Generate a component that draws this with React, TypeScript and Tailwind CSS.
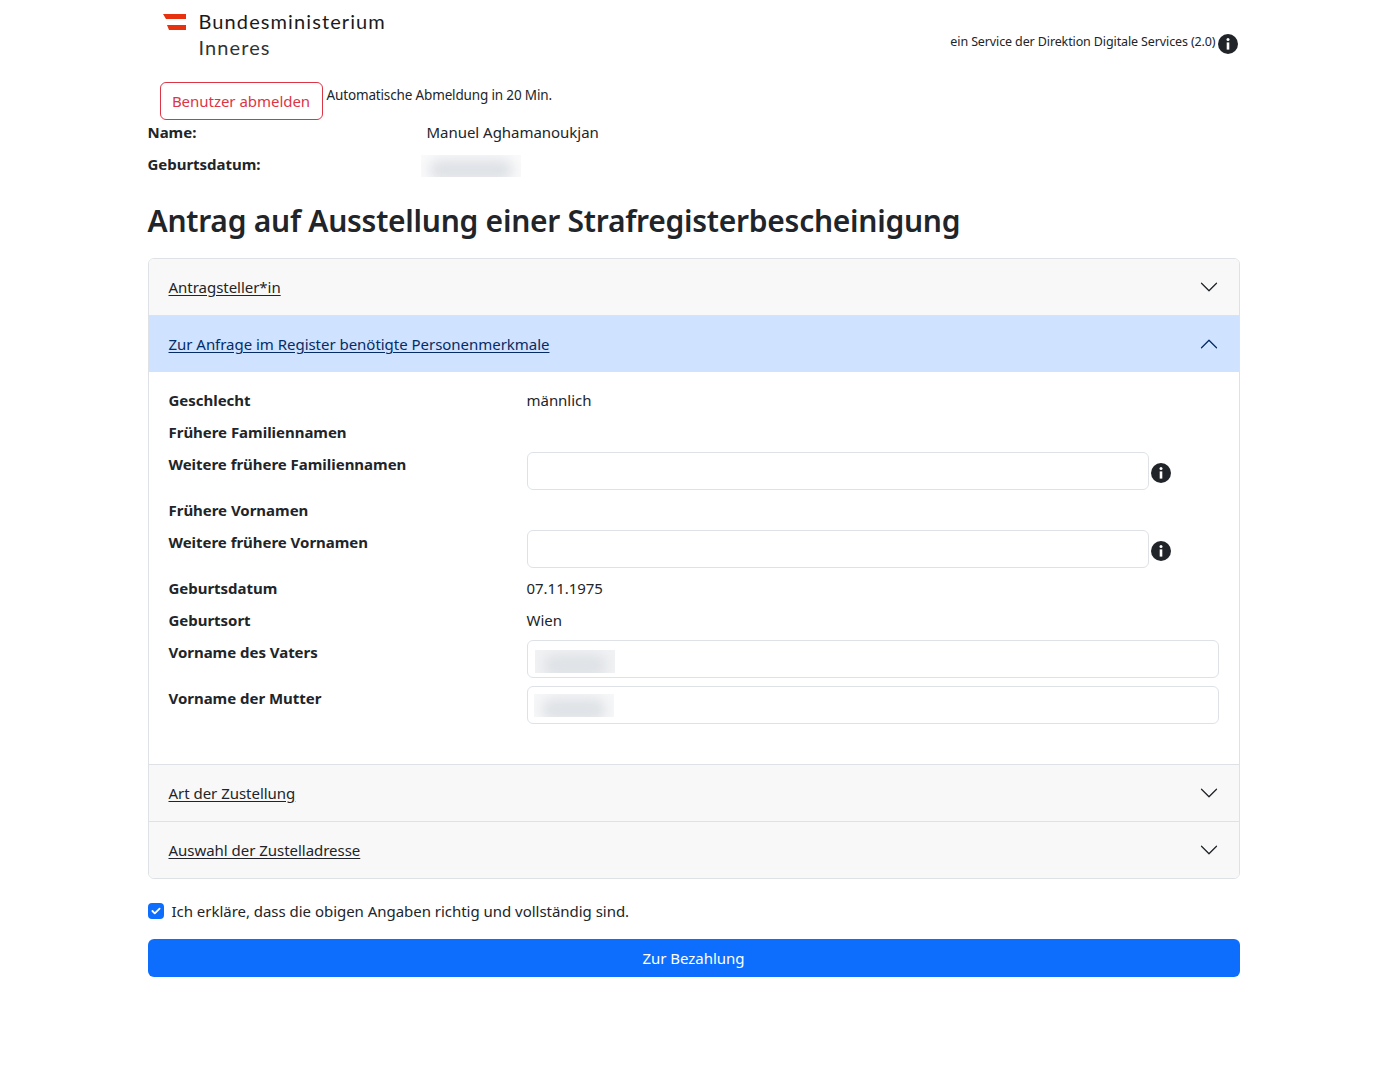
function InfoIcon({ className }: { className?: string }) {
    return (
        <svg className={className} viewBox="0 0 20 20" aria-hidden="true">
            <circle cx="10" cy="10" r="10" fill="#212529" />
            <circle cx="10" cy="5.6" r="1.5" fill="#fff" />
            <rect x="8.7" y="8.4" width="2.6" height="7.2" fill="#fff" />
        </svg>
    )
}

function Chevron({ up }: { up?: boolean }) {
    return (
        <svg className={up ? 'h-5 w-5 rotate-180' : 'h-5 w-5'} viewBox="0 0 16 16" fill="currentColor" aria-hidden="true">
            <path
                fillRule="evenodd"
                d="M1.646 4.646a.5.5 0 0 1 .708 0L8 10.293l5.646-5.647a.5.5 0 0 1 .708.708l-6 6a.5.5 0 0 1-.708 0l-6-6a.5.5 0 0 1 0-.708z"
            />
        </svg>
    )
}

function Blurred({ className }: { className?: string }) {
    return (
        <div className={`overflow-hidden ${className ?? ''}`}>
            <div className="mx-2 mt-1 h-full rounded-full bg-[#dfe2e6] blur-[6px]" />
        </div>
    )
}

function AccordionHeader({ title, open }: { title: string; open?: boolean }) {
    return (
        <div
            className={
                open
                    ? 'flex h-[56px] items-center justify-between bg-[#cfe2ff] pl-5 pr-5 text-[#052c65]'
                    : 'flex h-[56px] items-center justify-between bg-[#f8f8f8] pl-5 pr-5 text-[#212529]'
            }
        >
            <span className="underline underline-offset-2">{title}</span>
            <Chevron up={open} />
        </div>
    )
}

function Row({ label, children }: { label: string; children?: React.ReactNode }) {
    return (
        <div className="mb-2 grid grid-cols-[358px_1fr]">
            <div className="font-bold">{label}</div>
            <div>{children}</div>
        </div>
    )
}

function InputWithInfo() {
    return (
        <div className="flex items-center">
            <div className="h-[38px] w-[622px] rounded-md border border-[#dee2e6] bg-white" />
            <InfoIcon className="ml-[2px] mt-[3px] h-5 w-5" />
        </div>
    )
}

export default function App() {
    return (
        <div className="min-h-[1091px] bg-white font-['Noto_Sans',sans-serif] text-[15px] leading-6 tracking-[-0.03px] text-[#212529]">
            <div className="mx-auto w-[1092px]">
                <div className="flex h-[82px] items-start justify-between">
                    <div className="ml-[15px] mt-[14px] flex items-start">
                        <svg width="24" height="16" viewBox="0 0 24 16" aria-hidden="true">
                            <polygon points="0,0 23,0 23,5 3,5" fill="#e6320f" />
                            <polygon points="4,11 23,11 23,16 6,16" fill="#e6320f" />
                        </svg>
                        <div className="ml-[12px] -mt-[6px] font-['Lato',sans-serif] text-[20px] leading-[26px] tracking-[1.1px] text-[#1a1a1a]">
                            <div>Bundesministerium</div>
                            <div className="text-[#333]">Inneres</div>
                        </div>
                    </div>
                    <div className="mr-[2px] mt-[34px] flex items-center text-[12.5px] tracking-[-0.12px]">
                        <span className="-mt-[4px]">ein Service der Direktion Digitale Services (2.0)</span>
                        <InfoIcon className="ml-[2px] h-5 w-5" />
                    </div>
                </div>
                <div className="ml-[12px] flex h-[38px] items-start">
                    <div className="flex h-[38px] w-[163px] items-center justify-center rounded-md border border-[#dc3545] text-[#dc3545]">
                        Benutzer abmelden
                    </div>
                    <div className="ml-[4px] mt-[1px] text-[13.5px] tracking-[-0.15px]">Automatische Abmeldung in 20 Min.</div>
                </div>
                <div className="grid grid-cols-[279px_1fr]">
                    <div className="mb-2 font-bold">Name:</div>
                    <div className="mb-2">Manuel Aghamanoukjan</div>
                    <div className="mb-2 font-bold">Geburtsdatum:</div>
                    <div className="mb-2">
                        <Blurred className="-ml-[6px] mt-[3px] h-[22px] w-[100px] bg-[#fafafb]" />
                    </div>
                </div>
                <h1 className="mb-[18px] mt-[17px] text-[30px] font-semibold leading-[38px] tracking-[-0.26px]">
                    Antrag auf Ausstellung einer Strafregisterbescheinigung
                </h1>
                <div className="overflow-hidden rounded-md border border-[#dee2e6]">
                    <AccordionHeader title="Antragsteller*in" />
                    <div className="h-px bg-[#dee2e6]" />
                    <AccordionHeader title="Zur Anfrage im Register benötigte Personenmerkmale" open />
                    <div className="px-5 pb-8 pt-4">
                        <Row label="Geschlecht">männlich</Row>
                        <Row label="Frühere Familiennamen" />
                        <Row label="Weitere frühere Familiennamen">
                            <InputWithInfo />
                        </Row>
                        <Row label="Frühere Vornamen" />
                        <Row label="Weitere frühere Vornamen">
                            <InputWithInfo />
                        </Row>
                        <Row label="Geburtsdatum">07.11.1975</Row>
                        <Row label="Geburtsort">Wien</Row>
                        <Row label="Vorname des Vaters">
                            <div className="h-[38px] rounded-md border border-[#dee2e6] pl-[7px] pt-[9px]">
                                <Blurred className="h-[23px] w-[80px] bg-[#f1f2f4]" />
                            </div>
                        </Row>
                        <Row label="Vorname der Mutter">
                            <div className="h-[38px] rounded-md border border-[#dee2e6] pl-[6px] pt-[7px]">
                                <Blurred className="h-[23px] w-[80px] bg-[#f6f7f8]" />
                            </div>
                        </Row>
                    </div>
                    <div className="h-px bg-[#dee2e6]" />
                    <AccordionHeader title="Art der Zustellung" />
                    <div className="h-px bg-[#dee2e6]" />
                    <AccordionHeader title="Auswahl der Zustelladresse" />
                </div>
                <div className="mt-[20px] flex items-center">
                    <div className="flex h-4 w-4 items-center justify-center rounded-[4px] bg-[#0d6efd]">
                        <svg className="h-3 w-3" viewBox="0 0 20 20" fill="none" stroke="#fff" strokeWidth={3} strokeLinecap="round" strokeLinejoin="round" aria-hidden="true">
                            <path d="m4 10 4 4 8-8" />
                        </svg>
                    </div>
                    <span className="ml-2">Ich erkläre, dass die obigen Angaben richtig und vollständig sind.</span>
                </div>
                <div className="mt-[16px] flex h-[38px] items-center justify-center rounded-md bg-[#0d6efd] text-white">
                    Zur Bezahlung
                </div>
            </div>
        </div>
    )
}
